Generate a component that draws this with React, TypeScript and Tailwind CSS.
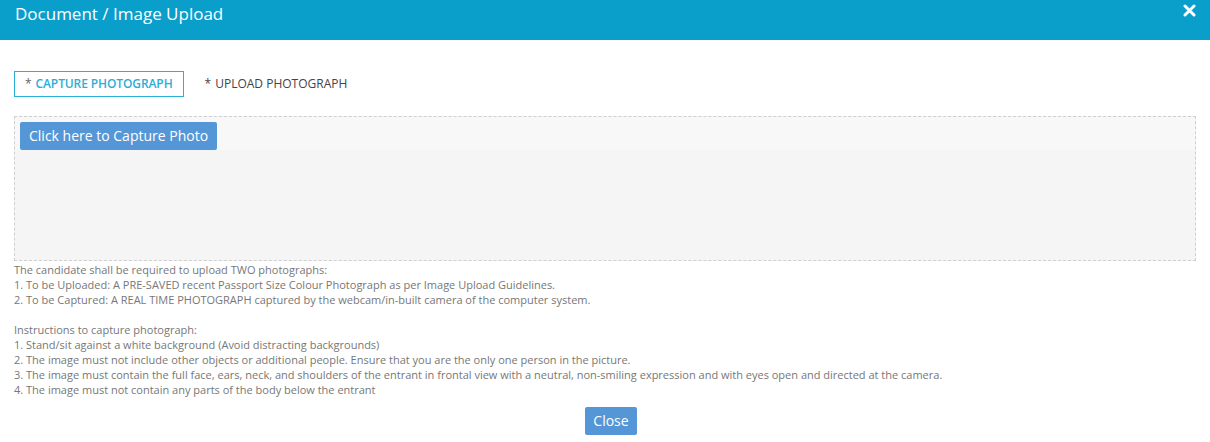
export default function App() {
  return (
    <div className="w-[1210px] h-[442px] bg-white overflow-hidden" style={{ fontFamily: '"Open Sans", sans-serif' }}>
      <div className="h-10 bg-[#0a9ecb] flex items-start justify-between pl-[15px] pr-[14px]">
        <h4 className="text-white text-[17px] leading-[28px]">Document / Image Upload</h4>
        <button className="text-white mt-[4px]">
          <svg width="13" height="13" viewBox="0 0 13 13">
            <path d="M2 2L11 11M11 2L2 11" stroke="white" strokeWidth="3" strokeLinecap="round" />
          </svg>
        </button>
      </div>

      <div className="px-[14px]">
        <div className="flex items-center gap-[21px] pt-[31px]">
          <div className="h-[26px] px-[10px] border border-[#2cb0d8] text-[12px] font-semibold flex items-center text-[#2aaed6] tracking-[-0.1px]">
            <span className="text-[#666] font-normal mr-[4px]">*</span>CAPTURE PHOTOGRAPH
          </div>
          <div className="text-[12px] text-[#444] font-medium flex items-center">
            <span className="mr-[4px]">*</span>UPLOAD PHOTOGRAPH
          </div>
        </div>

        <div className="mt-[19px] h-[145px] border border-dashed border-[#cfcfcf] bg-[#f5f5f5]">
          <div className="h-[33px] bg-[#f8f8f8] pl-[5px] pt-[5px]">
            <button className="h-[28px] px-[9px] bg-[#5596d6] rounded-[2px] text-white text-[14px] font-medium leading-none">
              Click here to Capture Photo
            </button>
          </div>
        </div>

        <div className="text-[11px] leading-[15px] text-[#777] mt-[1px]">
          <p>The candidate shall be required to upload TWO photographs:</p>
          <p>1. To be Uploaded: A PRE-SAVED recent Passport Size Colour Photograph as per Image Upload Guidelines.</p>
          <p>2. To be Captured: A REAL TIME PHOTOGRAPH captured by the webcam/in-built camera of the computer system.</p>
          <p>&nbsp;</p>
          <p>Instructions to capture photograph:</p>
          <p>1. Stand/sit against a white background (Avoid distracting backgrounds)</p>
          <p>2. The image must not include other objects or additional people. Ensure that you are the only one person in the picture.</p>
          <p>3. The image must contain the full face, ears, neck, and shoulders of the entrant in frontal view with a neutral, non-smiling expression and with eyes open and directed at the camera.</p>
          <p>4. The image must not contain any parts of the body below the entrant</p>
        </div>

        <div className="flex justify-center mt-[10px] pl-[12px]">
          <button className="h-[28px] px-[8px] bg-[#5596d6] rounded-[2px] text-white text-[14px] leading-none">
            Close
          </button>
        </div>
      </div>
    </div>
  );
}
